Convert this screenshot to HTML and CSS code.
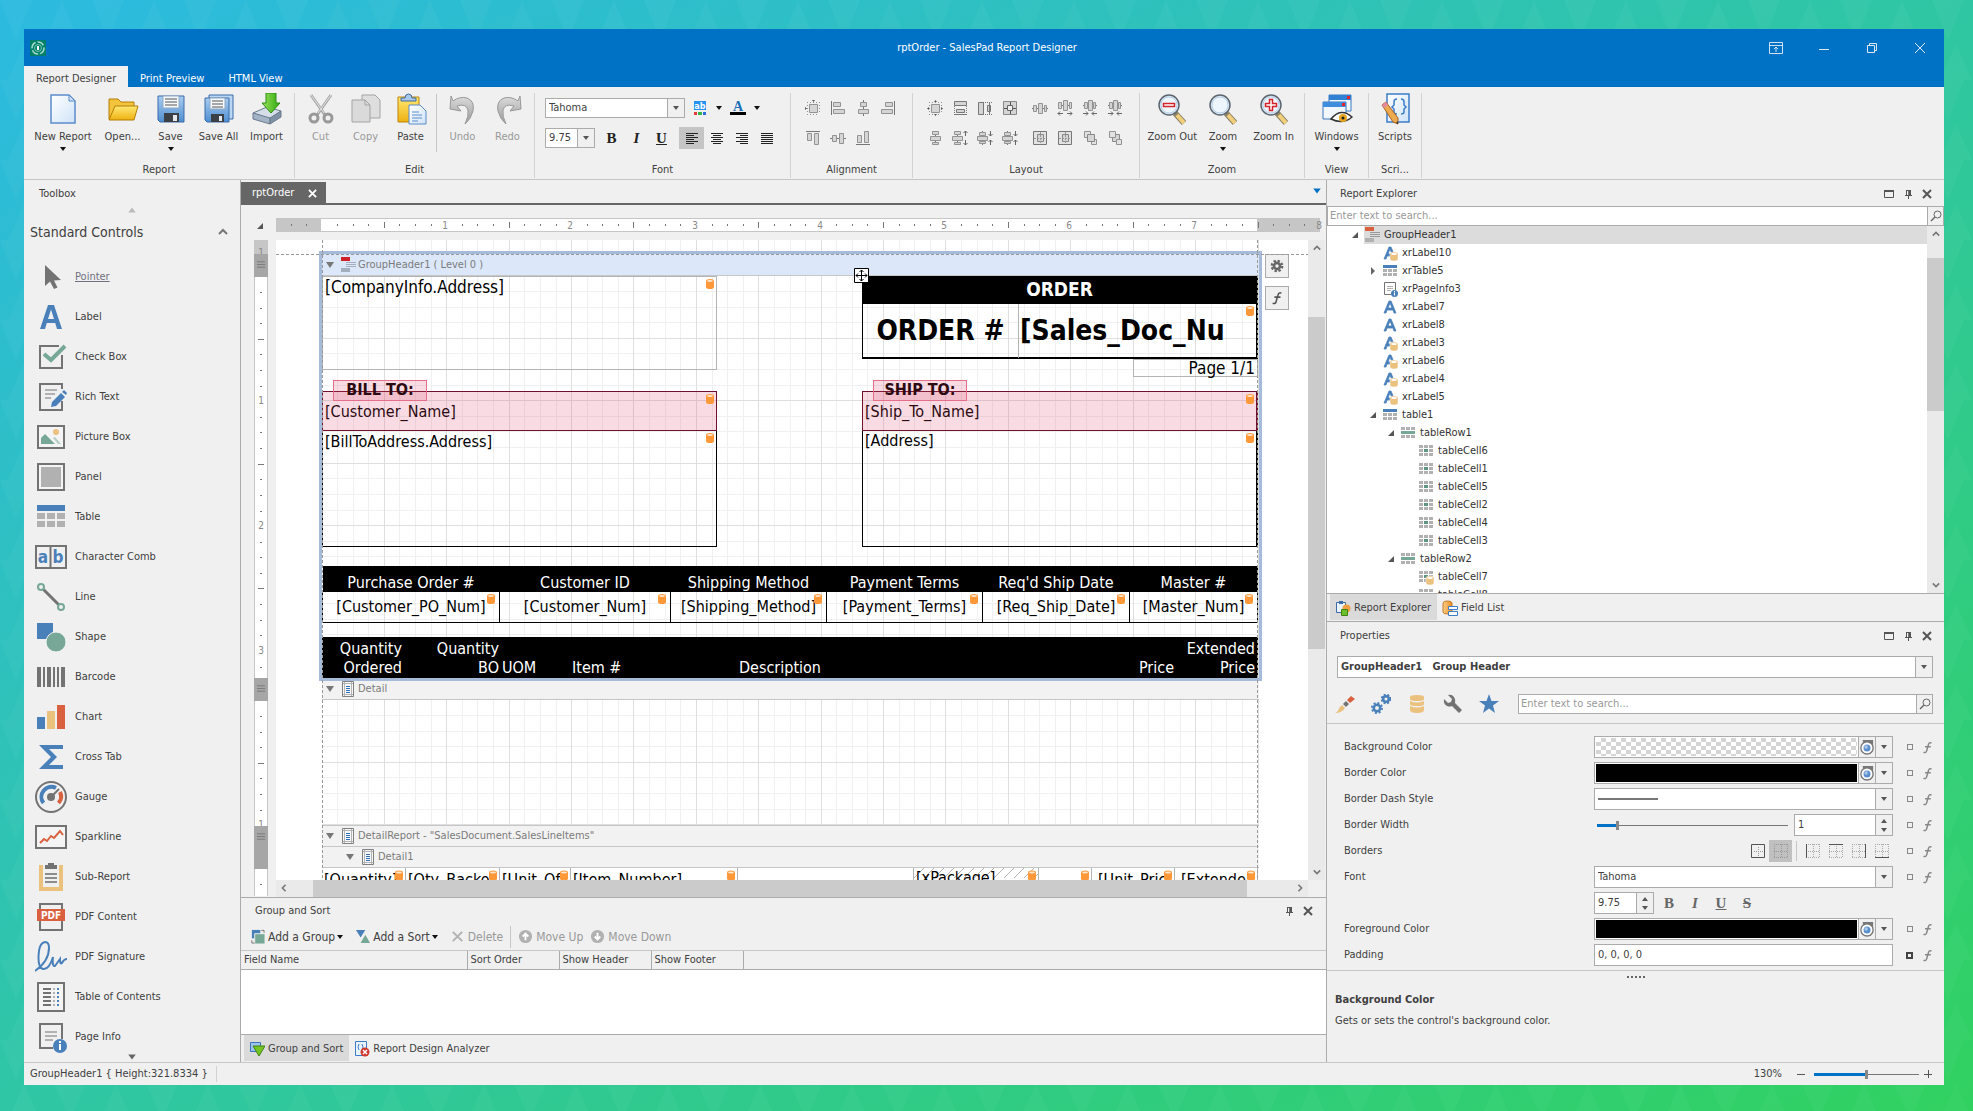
FILE: index.html
```html
<!DOCTYPE html>
<html lang="en">
<head>
<meta charset="utf-8">
<title>rptOrder - SalesPad Report Designer</title>
<link rel="stylesheet" href="styles.css">
</head>
<body>
<svg class="defs" aria-hidden="true">
  <defs>
    <linearGradient id="g-paper" x1="0" y1="0" x2="1" y2="1"><stop offset="0" stop-color="#fff"/><stop offset="1" stop-color="#cfe3f8"/></linearGradient>
    <linearGradient id="g-gold" x1="0" y1="0" x2="0" y2="1"><stop offset="0" stop-color="#ffe873"/><stop offset="1" stop-color="#eeb111"/></linearGradient>
    <linearGradient id="g-blue" x1="0" y1="0" x2="0" y2="1"><stop offset="0" stop-color="#a9cdf1"/><stop offset="1" stop-color="#4f8ed0"/></linearGradient>
    <linearGradient id="g-green" x1="0" y1="0" x2="1" y2="0"><stop offset="0" stop-color="#9be35a"/><stop offset="1" stop-color="#2fa80f"/></linearGradient>
    <linearGradient id="g-gray" x1="0" y1="0" x2="0" y2="1"><stop offset="0" stop-color="#dcdcdc"/><stop offset="1" stop-color="#9a9a9a"/></linearGradient>
    <linearGradient id="g-orange" x1="0" y1="0" x2="1" y2="0"><stop offset="0" stop-color="#fbd08a"/><stop offset="1" stop-color="#e98a1f"/></linearGradient>
    <pattern id="p-back" width="92" height="80" patternUnits="userSpaceOnUse"><path d="M0 0L16 40L32 0zM46 40L62 0L78 40zM8 80L24 44L40 80zM54 44L70 80L86 44z" fill="#fff" opacity=".03"/></pattern>
    <pattern id="p-hatch" width="10" height="10" patternUnits="userSpaceOnUse"><path d="M-2 12L12 -2M-2 2L2 -2M8 12L12 8" stroke="#b4b4b4"/></pattern>
  </defs>
  <symbol id="db" viewBox="0 0 8 10"><path d="M0 2Q0 0 4 0T8 2V8Q8 10 4 10T0 8z" fill="#ff9838"/><ellipse cx="4" cy="2" rx="3" ry="1" fill="#ffe6cf"/></symbol>
  <symbol id="down" viewBox="0 0 8 8"><path d="M1 2h6L4 6z" fill="currentColor"/></symbol>
  <symbol id="up" viewBox="0 0 8 8"><path d="M1 6h6L4 2z" fill="currentColor"/></symbol>
  <symbol id="tri" viewBox="0 0 8 8"><path d="M0 1h8L4 7z" fill="#777"/></symbol>
  <symbol id="chev-u" viewBox="0 0 10 10"><path d="M1 7L5 3L9 7" fill="none" stroke="#777" stroke-width="2"/></symbol>
  <symbol id="chev-d" viewBox="0 0 10 10"><path d="M1 3L5 7L9 3" fill="none" stroke="#777" stroke-width="2"/></symbol>
  <symbol id="chev-l" viewBox="0 0 10 10"><path d="M7 1L3 5L7 9" fill="none" stroke="#777" stroke-width="2"/></symbol>
  <symbol id="chev-r" viewBox="0 0 10 10"><path d="M3 1L7 5L3 9" fill="none" stroke="#777" stroke-width="2"/></symbol>
  <symbol id="open" viewBox="0 0 8 8"><path d="M7 1V7H1z" fill="#555"/></symbol>
  <symbol id="shut" viewBox="0 0 8 8"><path d="M2 0V8L6 4z" fill="#666"/></symbol>
  <symbol id="close" viewBox="0 0 10 10"><path d="M1 1L9 9M9 1L1 9" stroke="currentColor" stroke-width="2"/></symbol>
  <symbol id="pin" viewBox="0 0 10 10"><path d="M3.500 1V6M6 1v5" stroke="#555"/><path d="M5.500 1H8v5H5.500zM2 6h7v1H2zM5 7h1v3H5zM3 1h5v1H3z" fill="#555"/></symbol>
  <symbol id="maxi" viewBox="0 0 10 10"><path d="M.5 1.500h9v7h-9z" fill="none" stroke="#555"/><path d="M0 1h10v2H0z" fill="#555"/></symbol>
  <symbol id="search" viewBox="0 0 12 12"><circle cx="7.500" cy="4.500" r="3.500" fill="none" stroke="#666"/><path d="M5 7L1 11" stroke="#666" stroke-width="1.500"/></symbol>
  <symbol id="fx" viewBox="0 0 12 16"><path d="M11 2.500Q8 1 7 5L5 12Q4.500 15 1 14M3 7h7" fill="none" stroke="currentColor" stroke-width="1.800"/></symbol>

  <symbol id="r-new" viewBox="0 0 32 32"><path d="M4 2H22L28 8V30H4z" fill="url(#g-paper)" stroke="#5b8ccb" stroke-width="1.500"/><path d="M22 2V8H28z" fill="#cfe0f5" stroke="#5b8ccb"/></symbol>
  <symbol id="r-open" viewBox="0 0 32 32"><path d="M2 26V6H11L14 9H27V14" fill="#f3c33c" stroke="#b57d07"/><path d="M2 27L8 13H31L27 27z" fill="url(#g-gold)" stroke="#b57d07"/></symbol>
  <symbol id="r-save" viewBox="0 0 32 32"><path d="M3 3H29V29H5L3 27z" fill="url(#g-blue)" stroke="#3a6cab"/><path d="M8 3H24V15H8z" fill="#f6f8fa" stroke="#8fa9c5"/><path d="M10 6H22M10 9H22M10 12H22" stroke="#555"/><path d="M9 20H24V29H9z" fill="#3b3f46"/><path d="M18 22H22V28H18z" fill="#e5e9ee"/></symbol>
  <symbol id="r-saveall" viewBox="0 0 32 32"><path d="M6 2H30V26H6z" fill="#b9d6f3" stroke="#3a6cab"/><path d="M2 5H26V29H4L2 27z" fill="url(#g-blue)" stroke="#3a6cab"/><path d="M7 5H22V16H7z" fill="#f6f8fa" stroke="#8fa9c5"/><path d="M9 8H20M9 11H20M9 14H20" stroke="#555"/><path d="M8 21H21V29H8z" fill="#3b3f46"/><path d="M16 23H19V28H16z" fill="#e5e9ee"/></symbol>
  <symbol id="r-import" viewBox="0 0 32 32"><path d="M2 20L16 14L30 18L19 26z" fill="#d5dee8" stroke="#6b7a8c"/><path d="M2 20L19 25V31L2 26z" fill="#a3b4c6" stroke="#6b7a8c"/><path d="M19 25L30 18V24L19 31z" fill="#7f91a5" stroke="#6b7a8c"/><path d="M15 0H25V10H29L20 20L11 10H15z" fill="url(#g-green)" stroke="#2d8d14"/></symbol>
  <symbol id="r-cut" viewBox="0 0 32 32"><path d="M6 2L20 22M26 2L12 22" stroke="#a8a8a8" stroke-width="3"/><path d="M6 2L19 20M26 2L13 20" stroke="#e2e2e2"/><circle cx="9" cy="25" r="4" fill="none" stroke="#999" stroke-width="3"/><circle cx="23" cy="25" r="4" fill="none" stroke="#999" stroke-width="3"/></symbol>
  <symbol id="r-copy" viewBox="0 0 32 32"><path d="M12 2H25L30 7V25H12z" fill="#dedede" stroke="#a3a3a3"/><path d="M2 7H15L20 12V29H2z" fill="#dadada" stroke="#a3a3a3"/><path d="M15 7V12H20" fill="none" stroke="#a3a3a3"/></symbol>
  <symbol id="r-paste" viewBox="0 0 32 32"><path d="M3 4H24V29H3z" fill="url(#g-gold)" stroke="#bd8508"/><path d="M6 8V5H10Q10 1 13.500 1T17 5H21V8z" fill="#a9c8ea" stroke="#41699b"/><path d="M14 12H25L31 18V31H14z" fill="url(#g-paper)" stroke="#5b8ccb"/><path d="M17 19H24M17 22H27M17 25H27M17 28H23" stroke="#5b8ccb"/></symbol>
  <symbol id="r-undo" viewBox="0 0 32 32"><path d="M4 3L6 8Q13 3 20 5Q28 8 26 18Q24 26 18 31Q22 23 21 17Q19 10 10 13L14 18L3 16z" fill="url(#g-gray)" stroke="#989898"/></symbol>
  <symbol id="r-redo" viewBox="0 0 32 32"><path d="M28 3L26 8Q19 3 12 5Q4 8 6 18Q8 26 14 31Q10 23 11 17Q13 10 22 13L18 18L29 16z" fill="url(#g-gray)" stroke="#989898"/></symbol>
  <symbol id="r-lens" viewBox="0 0 32 32"><path d="M19 20L28 30" stroke="#8d8468" stroke-width="6"/><path d="M21 22L28 30" stroke="#f2cf7a" stroke-width="4"/><circle cx="13" cy="12" r="10" fill="#dcebf9" stroke="#5d666f" stroke-width="1.500"/><circle cx="13" cy="12" r="8" fill="#eef6fd" stroke="#b8cfe6"/></symbol>
  <symbol id="r-windows" viewBox="0 0 32 32"><path d="M8 2H30V18H8z" fill="#f1f7fd" stroke="#3a78c0"/><path d="M8 2H30V7H8z" fill="#2f7fd4"/><path d="M2 9H25V26H2z" fill="#f1f7fd" stroke="#3a78c0"/><path d="M2 9H25V14H2z" fill="#3f8ede"/><path d="M26 3h3v3h-3zM21 10h3v3h-3z" fill="#e0262b"/><path d="M10 26Q20 14 31 24Q22 32 10 26z" fill="#fff" stroke="#333" stroke-width="1.500"/><circle cx="22" cy="25" r="4" fill="#e5a51c"/><circle cx="22" cy="25" r="1.500" fill="#222"/></symbol>
  <symbol id="r-scripts" viewBox="0 0 32 32"><path d="M8 1H30V29H8z" fill="url(#g-paper)" stroke="#3d7cc9" stroke-width="1.500"/><path d="M18 6Q15 6 15 9V12L13 14L15 16V19Q15 21 18 21M22 6Q25 6 25 9V12L27 14L25 16V19Q25 21 22 21" fill="none" stroke="#3d7cc9" stroke-width="1.500"/><path d="M3 12L7 9L19 25L19 31L14 29z" fill="#edaa4e" stroke="#a4602a"/><path d="M3 12L7 9L9 12L5 15z" fill="#e58aa0"/><path d="M17 30L19 31V28z" fill="#333"/></symbol>

  <symbol id="al-grid" viewBox="0 0 16 16"><path d="M4.500 4.500h8v8h-8z" fill="#d5d5d5" stroke="#939393"/><path d="M2 2.500h12M2 14.500h12M2.500 2v12M14.500 2v12" stroke="#939393" stroke-dasharray="1 2"/><path d="M7 0h3L8.500 2zM0 7v3L2 8.500z" fill="#555"/></symbol>
  <symbol id="ly-grid" viewBox="0 0 16 16"><path d="M4.500 4.500h8v8h-8z" fill="#d5d5d5" stroke="#939393"/><path d="M2 2.500h12M2 14.500h12M2.500 2v12M14.500 2v12" stroke="#939393" stroke-dasharray="1 2"/><path d="M7 2h3L8.500 0zM2 7v3L0 8.500zM7 14h3L8.500 16zM14 7v3L16 8.500z" fill="#555"/></symbol>
  <symbol id="al-left" viewBox="0 0 16 16"><path d="M1.500 1v14" stroke="#777"/><path d="M3.500 2.500h7v4h-7zM3.500 9.500h11v4h-11z" fill="#d5d5d5" stroke="#939393"/></symbol>
  <symbol id="al-center" viewBox="0 0 16 16"><path d="M8.500 0v16" stroke="#777"/><path d="M5.500 2.500h6v4h-6zM3.500 9.500h10v4h-10z" fill="#d5d5d5" stroke="#939393"/></symbol>
  <symbol id="al-right" viewBox="0 0 16 16"><path d="M14.500 1v14" stroke="#777"/><path d="M5.500 2.500h7v4h-7zM1.500 9.500h11v4h-11z" fill="#d5d5d5" stroke="#939393"/></symbol>
  <symbol id="al-top" viewBox="0 0 16 16"><path d="M1 1.500h14" stroke="#777"/><path d="M2.500 3.500h4v7h-4zM9.500 3.500h4v11h-4z" fill="#d5d5d5" stroke="#939393"/></symbol>
  <symbol id="al-mid" viewBox="0 0 16 16"><path d="M0 8.500h16" stroke="#777"/><path d="M2.500 5.500h4v6h-4zM9.500 3.500h4v10h-4z" fill="#d5d5d5" stroke="#939393"/></symbol>
  <symbol id="al-bot" viewBox="0 0 16 16"><path d="M1 14.500h14" stroke="#777"/><path d="M2.500 5.500h4v7h-4zM9.500 1.500h4v11h-4z" fill="#d5d5d5" stroke="#939393"/></symbol>
  <symbol id="ly-w" viewBox="0 0 16 16"><path d="M2.500 1.500h12v4h-12zM4.500 9.500h8v3h-8z" fill="#d5d5d5" stroke="#777"/><path d="M2.500 6v9M14.500 6v9" stroke="#777" stroke-dasharray="1 1"/><path d="M2 14.500h13" stroke="#777"/></symbol>
  <symbol id="ly-h" viewBox="0 0 16 16"><path d="M1.500 2.500h5v12h-5zM10.500 5.500h3v6h-3z" fill="#d5d5d5" stroke="#777"/><path d="M6 2.500h9M6 14.500h9" stroke="#777" stroke-dasharray="1 1"/><path d="M12.500 2v13" stroke="#777"/></symbol>
  <symbol id="ly-wh" viewBox="0 0 16 16"><path d="M1.500 1.500h13v13h-13z" fill="#d5d5d5" stroke="#888"/><path d="M5.500 5.500h5v5h-5z" fill="#eee" stroke="#666"/><path d="M2 8.500h3M11 8.500h3M8.500 2v3M8.500 11v3" stroke="#555"/></symbol>
  <symbol id="ly-hs" viewBox="0 0 16 16"><path d="M0 8.500h16" stroke="#777"/><path d="M1.500 5.500h3v6h-3zM6.500 3.500h4v10h-4zM12.500 5.500h2v6h-2z" fill="#d5d5d5" stroke="#939393"/></symbol>
  <symbol id="ly-hi" viewBox="0 0 16 16"><path d="M1 5.500h14" stroke="#777"/><path d="M1.500 2.500h3v6h-3zM6.500 .5h4v10h-4zM12.500 2.500h2v6h-2z" fill="#d5d5d5" stroke="#939393"/><path d="M1 13.500h5M10 13.500h5M3 11.500L1 13.500L3 15.500M13 11.500L15 13.500L13 15.500" fill="none" stroke="#666"/></symbol>
  <symbol id="ly-hd" viewBox="0 0 16 16"><path d="M1 5.500h14" stroke="#777"/><path d="M2.500 2.500h3v6h-3zM6.500 .5h4v10h-4zM11.500 2.500h2v6h-2z" fill="#d5d5d5" stroke="#939393"/><path d="M1 13.500h5M10 13.500h5M4 11.500L6 13.500L4 15.500M12 11.500L10 13.500L12 15.500" fill="none" stroke="#666"/></symbol>
  <symbol id="ly-vs" viewBox="0 0 16 16"><path d="M8.500 1v14" stroke="#777"/><path d="M5.500 1.500h6v3h-6zM3.500 6.500h10v4h-10zM5.500 12.500h6v2h-6z" fill="#d5d5d5" stroke="#939393"/></symbol>
  <symbol id="ly-vi" viewBox="0 0 16 16"><path d="M5.500 1v14" stroke="#777"/><path d="M2.500 1.500h6v3h-6zM.5 6.500h10v4h-10zM2.500 12.500h6v2h-6z" fill="#d5d5d5" stroke="#939393"/><path d="M13.500 1v5M13.500 10v5M11.500 3L13.500 1L15.500 3M11.500 13L13.500 15L15.500 13" fill="none" stroke="#666"/></symbol>
  <symbol id="ly-vd" viewBox="0 0 16 16"><path d="M5.500 1v14" stroke="#777"/><path d="M2.500 2.500h6v3h-6zM.5 6.500h10v4h-10zM2.500 11.500h6v2h-6z" fill="#d5d5d5" stroke="#939393"/><path d="M13.500 1v5M13.500 10v5M11.500 4L13.500 6L15.500 4M11.500 12L13.500 10L15.500 12" fill="none" stroke="#666"/></symbol>
  <symbol id="ly-box" viewBox="0 0 16 16"><path d="M1.500 1.500h13v13h-13z" fill="#e2e2e2" stroke="#777"/><path d="M5.500 4.500h6v7h-6z" fill="#d5d5d5" stroke="#888"/><path d="M2 8.500h12M8.500 2v12" stroke="#999" stroke-dasharray="2 1"/></symbol>
  <symbol id="ly-front" viewBox="0 0 16 16"><path d="M2.500 1.500h6v6h-6zM9.500 9.500h5v5h-5z" fill="#e2e2e2" stroke="#939393"/><path d="M5.500 4.500h7v7h-7z" fill="#d5d5d5" stroke="#888"/></symbol>
  <symbol id="ly-back" viewBox="0 0 16 16"><path d="M5.500 4.500h7v7h-7z" fill="#d5d5d5" stroke="#888"/><path d="M2.500 1.500h6v6h-6zM9.500 9.500h5v5h-5z" fill="#e2e2e2" stroke="#939393"/></symbol>

  <symbol id="lines-l" viewBox="0 0 16 16"><path d="M2 3.500h12M2 5.500h8M2 7.500h12M2 9.500h8M2 11.500h12M2 13.500h8" stroke="#222"/></symbol>
  <symbol id="lines-c" viewBox="0 0 16 16"><path d="M2 3.500h12M4 5.500h8M2 7.500h12M4 9.500h8M2 11.500h12M4 13.500h8" stroke="#222"/></symbol>
  <symbol id="lines-r" viewBox="0 0 16 16"><path d="M2 3.500h12M6 5.500h8M2 7.500h12M6 9.500h8M2 11.500h12M6 13.500h8" stroke="#222"/></symbol>
  <symbol id="lines-j" viewBox="0 0 16 16"><path d="M2 3.500h12M2 5.500h12M2 7.500h12M2 9.500h12M2 11.500h12M2 13.500h12" stroke="#222"/></symbol>

  <symbol id="t-pointer" viewBox="0 0 32 32"><path d="M10 4V25L15 20.500L19 28L22.500 26.500L19 19.500L26 19z" fill="#737373"/></symbol>
  <symbol id="t-label" viewBox="0 0 32 32"><path fill-rule="evenodd" d="M5 28L13 4H19L27 28H22L20.200 22H11.800L10 28zM13 18H19L16 8.500z" fill="#4a80ba"/></symbol>
  <symbol id="t-check" viewBox="0 0 32 32"><path d="M24 5H5V27H27V14" fill="none" stroke="#737373" stroke-width="2"/><path d="M9 13L16 19L30 5" fill="none" stroke="#76a797" stroke-width="4"/></symbol>
  <symbol id="t-rich" viewBox="0 0 32 32"><path d="M27 8V3H5V29H27V20" fill="none" stroke="#737373" stroke-width="2"/><path d="M10 9H22M10 13H20M10 17H16" stroke="#b1b1b1" stroke-width="2"/><path d="M17 21L26 12L30 16L21 25L16 26zM27 11L29 9L32 12L31 14z" fill="#4a80ba"/></symbol>
  <symbol id="t-picture" viewBox="0 0 32 32"><path d="M3 5H29V27H3z" fill="#f4f4f4" stroke="#737373" stroke-width="2"/><path d="M6 23V17L10 13L20 23z" fill="#76a797"/><path d="M18 17L20 16L26 23H23z" fill="#b5cfc6"/><circle cx="21" cy="11" r="3" fill="#ebc17e"/></symbol>
  <symbol id="t-panel" viewBox="0 0 32 32"><path d="M3 3H29V29H3z" fill="#f4f4f4" stroke="#737373" stroke-width="2"/><path d="M6 6H26V26H6z" fill="#b1b1b1"/></symbol>
  <symbol id="t-table" viewBox="0 0 32 32"><path d="M2 4H30V10H2z" fill="#4a80ba"/><path d="M2 12h8v6H2zM12 12h8v6h-8zM22 12h8v6h-8zM2 20h8v6H2zM12 20h8v6h-8zM22 20h8v6h-8z" fill="#b1b1b1"/></symbol>
  <symbol id="t-comb" viewBox="0 0 32 32"><path d="M1 5H31V27H1zM15.500 5V27" fill="none" stroke="#737373" stroke-width="2"/></symbol>
  <symbol id="t-line" viewBox="0 0 32 32"><path d="M8 8L24 24" stroke="#737373" stroke-width="3"/><circle cx="6" cy="6" r="3" fill="#f0f0f0" stroke="#76a797" stroke-width="2"/><circle cx="26" cy="26" r="3" fill="#f0f0f0" stroke="#76a797" stroke-width="2"/></symbol>
  <symbol id="t-shape" viewBox="0 0 32 32"><path d="M2 2H18V18H2z" fill="#4a80ba"/><circle cx="21" cy="21" r="10" fill="#76a797" stroke="#f0f0f0"/></symbol>
  <symbol id="t-barcode" viewBox="0 0 32 32"><path d="M2 6h4v20H2zM8 6h2v20H8zM12 6h4v20h-4zM18 6h2v20h-2zM22 6h2v20h-2zM26 6h4v20h-4z" fill="#737373"/></symbol>
  <symbol id="t-chart" viewBox="0 0 32 32"><path d="M2 16h8v12H2z" fill="#4a80ba"/><path d="M12 10h8v18h-8z" fill="#ebc17e"/><path d="M22 4h8v24h-8z" fill="#d9613f"/></symbol>
  <symbol id="t-sigma" viewBox="0 0 32 32"><path d="M4 4H28V8H14L22 16L14 24H28V28H4L16 16z" fill="#4a80ba"/></symbol>
  <symbol id="t-gauge" viewBox="0 0 32 32"><circle cx="16" cy="16" r="15" fill="none" stroke="#737373" stroke-width="2"/><path d="M8.500 22A10 10 0 0 1 21 7" fill="none" stroke="#4a80ba" stroke-width="4"/><path d="M25 11A10 10 0 0 1 23.500 22" fill="none" stroke="#d9613f" stroke-width="4"/><path d="M16 16L24 8" stroke="#737373" stroke-width="2"/><circle cx="16" cy="16" r="4" fill="#737373"/></symbol>
  <symbol id="t-spark" viewBox="0 0 32 32"><path d="M1 5H31V27H1z" fill="#f4f4f4" stroke="#737373" stroke-width="2"/><path d="M5 22L9 18L12 20L16 15L19 17L25 10L28 14" fill="none" stroke="#d9613f" stroke-width="2"/></symbol>
  <symbol id="t-sub" viewBox="0 0 32 32"><path d="M8 4H4V30H28V4H24V26H8z" fill="#ebc17e"/><path d="M10 4H13V2H19V4H22V8H10z" fill="#737373"/><path d="M10 13H22M10 17H22M10 21H22" stroke="#8c8c8c" stroke-width="2"/></symbol>
  <symbol id="t-pdf" viewBox="0 0 32 32"><path d="M5 3H27V29H5z" fill="none" stroke="#737373" stroke-width="2"/><path d="M2 8H30V20H2z" fill="#d9613f"/></symbol>
  <symbol id="t-sign" viewBox="0 0 32 32"><path d="M0 30Q14 20 14 7Q14 1 10 1Q5 2 4 10Q2 26 8 28Q14 29 18 16Q17 26 20 25L25 18Q25 24 27 22Q29 18 32 18" fill="none" stroke="#4a80ba" stroke-width="2"/></symbol>
  <symbol id="t-toc" viewBox="0 0 32 32"><path d="M3 2H29V30H3z" fill="#f4f4f4" stroke="#737373" stroke-width="2"/><path d="M8 8H16M8 12H16M8 16H16M8 20H16M8 24H16" stroke="#737373" stroke-width="2"/><path d="M19 7v18" stroke="#b1b1b1" stroke-width="2" stroke-dasharray="2 2"/><path d="M23 7v18" stroke="#4a80ba" stroke-width="2" stroke-dasharray="2 2"/></symbol>
  <symbol id="t-info" viewBox="0 0 32 32"><path d="M18 27H5V3H27V18" fill="none" stroke="#737373" stroke-width="2"/><path d="M10 11H22M10 15H22M10 19H18" stroke="#b1b1b1" stroke-width="2"/><circle cx="25" cy="25" r="7" fill="#4a80ba"/><path d="M24 20h2v2h-2zM24 23h2v6h-2z" fill="#fff"/></symbol>

  <symbol id="s-db" viewBox="0 0 16 16"><path d="M8 9Q8 7 12 7T16 9V14Q16 16 12 16T8 14z" fill="#ebc17e" stroke="#fff" stroke-width=".5"/><ellipse cx="12" cy="9" rx="3" ry="1" fill="#fff"/></symbol>
  <symbol id="s-group" viewBox="0 0 16 16"><path d="M1 0h9v4H1z" fill="#d9613f"/><path d="M6 5.500h10M6 7.500h10M6 9.500h10" stroke="#999"/><path d="M1 11h9v4H1z" fill="#b1b1b1"/></symbol>
  <symbol id="s-band" viewBox="0 0 16 16"><path d="M1 0h9v4H1z" fill="#d02027"/><path d="M6 5.500h10M6 7.500h10M6 9.500h10" stroke="#a5aebd"/><path d="M1 11h9v4H1z" fill="#a5aebd"/></symbol>
  <symbol id="s-label" viewBox="0 0 16 16"><path fill-rule="evenodd" d="M2 14L7 2H9L14 14H12L11 11H5L4 14zM6 9H10L8 4z" fill="#4a80ba" stroke="#4a80ba" stroke-width=".8"/></symbol>
  <symbol id="s-table" viewBox="0 0 16 16"><path d="M1 2H15V5H1z" fill="#4a80ba"/><path d="M1 6h4v3H1zM6 6h4v3H6zM11 6h4v3h-4zM1 10h4v3H1zM6 10h4v3H6zM11 10h4v3h-4z" fill="#b1b1b1"/></symbol>
  <symbol id="s-row" viewBox="0 0 16 16"><path d="M1 2h4v3H1zM6 2h4v3H6zM11 2h4v3h-4zM1 10h4v3H1zM6 10h4v3H6zM11 10h4v3h-4z" fill="#b1b1b1"/><path d="M1 6h14v3H1z" fill="#76a797"/></symbol>
  <symbol id="s-cell" viewBox="0 0 16 16"><path d="M1 2h4v3H1zM6 2h4v3H6zM11 2h4v3h-4zM1 6h4v3H1zM11 6h4v3h-4zM1 10h4v3H1zM6 10h4v3H6zM11 10h4v3h-4z" fill="#b1b1b1"/><path d="M6 6h4v3H6z" fill="#5f9584"/></symbol>
  <symbol id="s-detail" viewBox="0 0 16 16"><path d="M2.500 .5h11v15h-11z" fill="#f7f7f7" stroke="#808080"/><path d="M4.500 1v14M11.500 1v14M3 2.500h10M3 13.500h10" stroke="#b4b4b4"/><path d="M6 5.500h4M6 7.500h4M6 9.500h4M6 11.500h4" stroke="#2f6fb8"/></symbol>
  <symbol id="eye" viewBox="0 0 16 18"><path d="M3 1H15V12L12 17H6Z" fill="#777"/><ellipse cx="8" cy="10" rx="7" ry="7" fill="#fff" stroke="#777" stroke-width="1.500"/><circle cx="8" cy="10" r="4" fill="#5b8fce"/><circle cx="7" cy="9" r="2" fill="#a9c7ea"/></symbol>
  <symbol id="grip" viewBox="0 0 10 7"><path d="M0 .5h9M0 3.500h9M0 6.500h9" stroke="#777"/></symbol>
</svg>

<svg class="backdrop" aria-hidden="true"><rect width="100%" height="100%" fill="url(#p-back)"/></svg>

<div class="window">
  <header class="titlebar">
    <svg class="logo" viewBox="0 0 16 16"><path d="M0 0h16v16H0z" fill="#00806a"/><circle cx="8" cy="8" r="6" fill="none" stroke="#a8dccf" stroke-width="1.500" stroke-dasharray="7 2"/><circle cx="8" cy="8" r="3.500" fill="none" stroke="#7cc4b3"/><path d="M7 6h2v4H7z" fill="#fff"/></svg>
    <h1>rptOrder - SalesPad Report Designer</h1>
    <div class="winbtns">
      <button aria-label="Ribbon display options"><svg viewBox="0 0 14 14"><path d="M.5 1.500h13v11H.5zM.5 4.500h13M7 11V6M5 8L7 6L9 8" fill="none" stroke="#cfe3f5"/></svg></button>
      <button aria-label="Minimize"><svg viewBox="0 0 14 14"><path d="M2 8.500h10" stroke="#dbe9f6"/></svg></button>
      <button aria-label="Restore"><svg viewBox="0 0 14 14"><path d="M2.500 4.500h7v7h-7zM4.500 4V2.500h7v7H10" fill="none" stroke="#dbe9f6"/></svg></button>
      <button aria-label="Close"><svg viewBox="0 0 14 14"><path d="M2 2L12 12M12 2L2 12" stroke="#dbe9f6"/></svg></button>
    </div>
  </header>
  <nav class="ribbon-tabs">
    <button class="on">Report Designer</button><button>Print Preview</button><button>HTML View</button>
  </nav>

  <section class="ribbon" aria-label="Ribbon">
    <div class="group g-report">
      <div class="tools">
        <button class="big wide"><svg><use href="#r-new"/></svg><span>New Report</span><svg class="dd"><use href="#down"/></svg></button>
        <button class="big mid"><svg><use href="#r-open"/></svg><span>Open...</span></button>
        <button class="big"><svg><use href="#r-save"/></svg><span>Save</span><svg class="dd"><use href="#down"/></svg></button>
        <button class="big mid"><svg><use href="#r-saveall"/></svg><span>Save All</span></button>
        <button class="big"><svg><use href="#r-import"/></svg><span>Import</span></button>
      </div>
      <h2>Report</h2>
    </div>
    <div class="group g-edit">
      <div class="tools">
        <button class="big" disabled><svg><use href="#r-cut"/></svg><span>Cut</span></button>
        <button class="big" disabled><svg><use href="#r-copy"/></svg><span>Copy</span></button>
        <button class="big"><svg><use href="#r-paste"/></svg><span>Paste</span></button>
        <i class="vline"></i>
        <button class="big" disabled><svg><use href="#r-undo"/></svg><span>Undo</span></button>
        <button class="big" disabled><svg><use href="#r-redo"/></svg><span>Redo</span></button>
      </div>
      <h2>Edit</h2>
    </div>
    <div class="group g-font">
      <div class="tools rows">
        <div class="line">
          <span class="combo c-face"><select aria-label="Font"><option>Tahoma</option></select><i><svg><use href="#down"/></svg></i></span>
          <button class="ico tight" aria-label="Highlight colour"><svg viewBox="0 0 16 16"><path d="M2 1h12v9H2z" fill="#2492f0"/><text x="8" y="9" class="ab">ab</text><path d="M2 12h3v3H2z" fill="#e23b3b"/><path d="M6 12h4v3H6z" fill="#35b548"/><path d="M11 12h3v3h-3z" fill="#2c6ddc"/></svg></button>
          <svg class="dd"><use href="#down"/></svg>
          <button class="ico tight" aria-label="Font colour"><svg viewBox="0 0 16 16"><text x="8" y="11" class="acap">A</text><path d="M0 12h16v3H0z"/></svg></button>
          <svg class="dd"><use href="#down"/></svg>
        </div>
        <div class="line">
          <span class="combo c-size"><select aria-label="Font size"><option>9.75</option></select><i><svg><use href="#down"/></svg></i></span>
          <button class="ico glyph b first">B</button><button class="ico glyph i">I</button><button class="ico glyph u">U</button>
          <button class="ico gap on" aria-label="Left"><svg><use href="#lines-l"/></svg></button><button class="ico" aria-label="Centre"><svg><use href="#lines-c"/></svg></button><button class="ico" aria-label="Right"><svg><use href="#lines-r"/></svg></button><button class="ico" aria-label="Justify"><svg><use href="#lines-j"/></svg></button>
        </div>
      </div>
      <h2>Font</h2>
    </div>
    <div class="group g-align">
      <div class="tools rows">
        <div class="line"><button class="ico" aria-label="Align to grid"><svg><use href="#al-grid"/></svg></button><button class="ico" aria-label="Lefts"><svg><use href="#al-left"/></svg></button><button class="ico" aria-label="Centres"><svg><use href="#al-center"/></svg></button><button class="ico" aria-label="Rights"><svg><use href="#al-right"/></svg></button></div>
        <div class="line"><button class="ico" aria-label="Tops"><svg><use href="#al-top"/></svg></button><button class="ico" aria-label="Middles"><svg><use href="#al-mid"/></svg></button><button class="ico" aria-label="Bottoms"><svg><use href="#al-bot"/></svg></button></div>
      </div>
      <h2>Alignment</h2>
    </div>
    <div class="group g-layout">
      <div class="tools rows">
        <div class="line"><button class="ico" aria-label="Size to grid"><svg><use href="#ly-grid"/></svg></button><button class="ico" aria-label="Same width"><svg><use href="#ly-w"/></svg></button><button class="ico" aria-label="Same height"><svg><use href="#ly-h"/></svg></button><button class="ico" aria-label="Same size"><svg><use href="#ly-wh"/></svg></button><button class="ico gap" aria-label="Horizontal spacing"><svg><use href="#ly-hs"/></svg></button><button class="ico" aria-label="Increase horizontal"><svg><use href="#ly-hi"/></svg></button><button class="ico" aria-label="Decrease horizontal"><svg><use href="#ly-hd"/></svg></button><button class="ico" aria-label="Remove horizontal"><svg><use href="#ly-hd"/></svg></button></div>
        <div class="line"><button class="ico" aria-label="Vertical spacing"><svg><use href="#ly-vs"/></svg></button><button class="ico" aria-label="Increase vertical"><svg><use href="#ly-vi"/></svg></button><button class="ico" aria-label="Decrease vertical"><svg><use href="#ly-vd"/></svg></button><button class="ico" aria-label="Remove vertical"><svg><use href="#ly-vd"/></svg></button><button class="ico gap" aria-label="Centre horizontally"><svg><use href="#ly-box"/></svg></button><button class="ico" aria-label="Centre vertically"><svg><use href="#ly-box"/></svg></button><button class="ico" aria-label="Bring to front"><svg><use href="#ly-front"/></svg></button><button class="ico" aria-label="Send to back"><svg><use href="#ly-back"/></svg></button></div>
      </div>
      <h2>Layout</h2>
    </div>
    <div class="group g-zoom">
      <div class="tools">
        <button class="big"><svg viewBox="0 0 32 32"><use href="#r-lens"/><path d="M7.500 10.500h11v3h-11z" fill="#fff" stroke="#d3242b" stroke-width="1.500"/></svg><span>Zoom Out</span></button>
        <button class="big"><svg><use href="#r-lens"/></svg><span>Zoom</span><svg class="dd"><use href="#down"/></svg></button>
        <button class="big"><svg viewBox="0 0 32 32"><use href="#r-lens"/><path d="M11.500 6.500h3v4h4v3h-4v4h-3v-4h-4v-3h4z" fill="#fff" stroke="#d3242b" stroke-width="1.500"/></svg><span>Zoom In</span></button>
      </div>
      <h2>Zoom</h2>
    </div>
    <div class="group g-view">
      <div class="tools"><button class="big"><svg><use href="#r-windows"/></svg><span>Windows</span><svg class="dd"><use href="#down"/></svg></button></div>
      <h2>View</h2>
    </div>
    <div class="group g-scripts">
      <div class="tools"><button class="big"><svg><use href="#r-scripts"/></svg><span>Scripts</span></button></div>
      <h2>Scri...</h2>
    </div>
  </section>

  <main class="work">
    <aside class="toolbox">
      <h2>Toolbox</h2>
      <svg class="more faint"><use href="#up"/></svg>
      <h3>Standard Controls <svg><use href="#chev-u"/></svg></h3>
      <ul>
        <li><button class="picked"><svg><use href="#t-pointer"/></svg>Pointer</button></li>
        <li><button><svg><use href="#t-label"/></svg>Label</button></li>
        <li><button><svg><use href="#t-check"/></svg>Check Box</button></li>
        <li><button><svg><use href="#t-rich"/></svg>Rich Text</button></li>
        <li><button><svg><use href="#t-picture"/></svg>Picture Box</button></li>
        <li><button><svg><use href="#t-panel"/></svg>Panel</button></li>
        <li><button><svg><use href="#t-table"/></svg>Table</button></li>
        <li><button><svg viewBox="0 0 32 32"><use href="#t-comb"/><text x="8" y="22" class="comb">a</text><text x="23" y="22" class="comb">b</text></svg>Character Comb</button></li>
        <li><button><svg><use href="#t-line"/></svg>Line</button></li>
        <li><button><svg><use href="#t-shape"/></svg>Shape</button></li>
        <li><button><svg><use href="#t-barcode"/></svg>Barcode</button></li>
        <li><button><svg><use href="#t-chart"/></svg>Chart</button></li>
        <li><button><svg><use href="#t-sigma"/></svg>Cross Tab</button></li>
        <li><button><svg><use href="#t-gauge"/></svg>Gauge</button></li>
        <li><button><svg><use href="#t-spark"/></svg>Sparkline</button></li>
        <li><button><svg><use href="#t-sub"/></svg>Sub-Report</button></li>
        <li><button><svg viewBox="0 0 32 32"><use href="#t-pdf"/><text x="16" y="18" class="pdf">PDF</text></svg>PDF Content</button></li>
        <li><button><svg><use href="#t-sign"/></svg>PDF Signature</button></li>
        <li><button><svg><use href="#t-toc"/></svg>Table of Contents</button></li>
        <li><button><svg><use href="#t-info"/></svg>Page Info</button></li>
      </ul>
      <svg class="more last"><use href="#down"/></svg>
    </aside>

    <div class="center">
      <div class="doc-tabs"><button>rptOrder <svg><use href="#close"/></svg></button><svg class="menu"><use href="#down"/></svg></div>
      <div class="designer">
        <svg class="corner"><use href="#open"/></svg>
        <div class="hruler"><i class="out lead"></i><i class="out tail"></i><svg class="over" data-ruler="x" data-from="-2" data-marks="64"></svg></div>
        <div class="vruler">
          <svg class="out"><text x="7" y="16">1</text></svg>
          <i class="grip g-one"><svg><use href="#grip"/></svg></i>
          <svg class="seg s-one" data-ruler="y" data-marks="25"></svg>
          <i class="grip g-one"><svg><use href="#grip"/></svg></i>
          <svg class="seg s-two" data-ruler="y" data-marks="8"></svg>
          <i class="grip g-two"><svg><use href="#grip"/></svg></i>
          <svg class="seg s-end" data-ruler="y" data-marks="1"></svg>
        </div>

        <div class="canvas">
          <div class="sheet">
            <div class="topmargin"><svg class="grid"></svg></div>
            <section class="band selected">
              <header><svg class="t"><use href="#tri"/></svg><svg class="k"><use href="#s-band"/></svg>GroupHeader1 ( Level 0 )</header>
              <div class="body b-head">
                <svg class="grid"></svg>
                <div class="box plain x-company">[CompanyInfo.Address]<svg><use href="#db"/></svg></div>
                <div class="box x-addr left">[BillToAddress.Address]<svg><use href="#db"/></svg></div>
                <div class="box pink x-name left"><span>[Customer_Name]</span><svg><use href="#db"/></svg></div>
                <div class="tag left">BILL TO:</div>
                <div class="order"><b class="cap">ORDER</b><b class="num">ORDER #</b><b class="val">[Sales_Doc_Nu<svg><use href="#db"/></svg></b></div>
                <div class="pageno">Page 1/1</div>
                <div class="box x-addr right">[Address]<svg><use href="#db"/></svg></div>
                <div class="box pink x-name right"><span>[Ship_To_Name]</span><svg><use href="#db"/></svg></div>
                <div class="tag right">SHIP TO:</div>
                <table class="summary">
                  <colgroup><col class="c1"><col class="c2"><col class="c3"><col class="c3"><col class="c5"><col></colgroup>
                  <tr><th>Purchase Order #</th><th>Customer ID</th><th>Shipping Method</th><th>Payment Terms</th><th>Req'd Ship Date</th><th>Master #</th></tr>
                  <tr><td>[Customer_PO_Num]<svg><use href="#db"/></svg></td><td>[Customer_Num]<svg><use href="#db"/></svg></td><td>[Shipping_Method]<svg><use href="#db"/></svg></td><td>[Payment_Terms]<svg><use href="#db"/></svg></td><td>[Req_Ship_Date]<svg><use href="#db"/></svg></td><td>[Master_Num]<svg><use href="#db"/></svg></td></tr>
                </table>
                <div class="cols">
                  <span class="k1">Quantity<br>Ordered</span><span class="k2">Quantity<br>BO</span><span class="k3">UOM</span><span class="k4">Item #</span><span class="k5">Description</span><span class="k6">Price</span><span class="k7">Extended<br>Price</span>
                </div>
                <svg class="move" viewBox="0 0 15 15"><path d="M.5.500h14v14H.5z" fill="#fff" stroke="#000"/><path d="M7.500 2v11M2 7.500h11M5.500 4L7.500 2L9.500 4M5.500 11L7.500 13L9.500 11M4 5.500L2 7.500L4 9.500M11 5.500L13 7.500L11 9.500" fill="none" stroke="#000"/></svg>
              </div>
              <div class="smart">
                <button aria-label="Settings"><svg viewBox="0 0 16 16"><circle cx="8" cy="8" r="3.500" fill="none" stroke="#666" stroke-width="3"/><circle cx="8" cy="8" r="6" fill="none" stroke="#666" stroke-width="2.500" stroke-dasharray="2.700 2"/></svg></button>
                <button aria-label="Expressions"><svg><use href="#fx"/></svg></button>
              </div>
            </section>
            <section class="band">
              <header><svg class="t"><use href="#tri"/></svg><svg class="k"><use href="#s-detail"/></svg>Detail</header>
              <div class="body b-detail"><svg class="grid"></svg></div>
            </section>
            <section class="band">
              <header class="ruled"><svg class="t"><use href="#tri"/></svg><svg class="k"><use href="#s-detail"/></svg>DetailReport - "SalesDocument.SalesLineItems"</header>
              <header class="sub"><svg class="t"><use href="#tri"/></svg><svg class="k"><use href="#s-detail"/></svg>Detail1</header>
              <div class="body b-items">
                <span class="i1">[Quantity]<svg><use href="#db"/></svg></span><span class="i2">[Qty_Backo<svg><use href="#db"/></svg></span><span class="i3">[Unit_Of<svg><use href="#db"/></svg></span><span class="i4">[Item_Number]<svg><use href="#db"/></svg></span><span class="i5"></span><span class="i6"><svg class="hatch"><rect width="100%" height="100%" fill="url(#p-hatch)"/></svg><em>[xPackage]</em><svg><use href="#db"/></svg></span><span class="i7"><svg><use href="#db"/></svg></span><span class="i8">[Unit_Pric<svg><use href="#db"/></svg></span><span class="i9">[Extende<svg><use href="#db"/></svg></span>
              </div>
            </section>
          </div>
        </div>
        <div class="vscroll"><svg><use href="#chev-u"/></svg><i></i><svg><use href="#chev-d"/></svg></div>
        <div class="hscroll"><svg><use href="#chev-l"/></svg><i></i><svg><use href="#chev-r"/></svg></div>
      </div>

      <section class="sorter">
        <div class="caption"><h2>Group and Sort</h2><button aria-label="Pin"><svg><use href="#pin"/></svg></button><button aria-label="Close"><svg><use href="#close"/></svg></button></div>
        <div class="bar">
          <button><svg class="ic" viewBox="0 0 16 16"><path d="M2 1h9v9H2z" fill="#4a80ba"/><path d="M5 5h11v11H5z" fill="#76a797" stroke="#f0f0f0"/><path d="M12 1.500h3V4M2 12v3h3" fill="none" stroke="#737373"/></svg>Add a Group<svg class="dd"><use href="#down"/></svg></button>
          <button><svg class="ic" viewBox="0 0 16 16"><path d="M1 1h10L6 9z" fill="#4a80ba"/><path d="M6 15h10L11 6z" fill="#76a797"/></svg>Add a Sort<svg class="dd"><use href="#down"/></svg></button>
          <button disabled><svg class="ic" viewBox="0 0 16 16"><path d="M3 3L13 13M13 3L3 13" stroke="#b1b1b1" stroke-width="2"/></svg>Delete</button>
          <i class="vline"></i>
          <button disabled><svg class="ic" viewBox="0 0 16 16"><circle cx="8" cy="8" r="7" fill="#b1b1b1"/><path d="M8 12V5M5 8L8 5L11 8" fill="none" stroke="#fff" stroke-width="2"/></svg>Move Up</button>
          <button disabled><svg class="ic" viewBox="0 0 16 16"><circle cx="8" cy="8" r="7" fill="#b1b1b1"/><path d="M8 4V11M5 8L8 11L11 8" fill="none" stroke="#fff" stroke-width="2"/></svg>Move Down</button>
        </div>
        <table class="fields"><tr><th class="f1">Field Name</th><th>Sort Order</th><th>Show Header</th><th>Show Footer</th><th class="rest"></th></tr></table>
        <div class="blank"></div>
        <nav class="dock-tabs">
          <button class="on"><svg viewBox="0 0 16 16"><path d="M1.500 1.500h10v9h-10z" fill="#9cc4ee" stroke="#3d72b5"/><path d="M4 5h12L10 15z" fill="#74c425" stroke="#3f8411"/></svg>Group and Sort</button>
          <button><svg viewBox="0 0 16 16"><path d="M1.500.500h11v14h-11z" fill="#eaf3fc" stroke="#3d7cc9"/><path d="M5 3L4 6L5 9M8 3L9 6L8 9" fill="none" stroke="#3d7cc9"/><circle cx="11" cy="11" r="4.500" fill="#d0392f"/><path d="M9 9L13 13M13 9L9 13" stroke="#fff" stroke-width="1.500"/></svg>Report Design Analyzer</button>
        </nav>
      </section>
    </div>

    <aside class="side">
      <section class="explorer">
        <div class="caption"><h2>Report Explorer</h2><button aria-label="Maximize"><svg><use href="#maxi"/></svg></button><button aria-label="Pin"><svg><use href="#pin"/></svg></button><button aria-label="Close"><svg><use href="#close"/></svg></button></div>
        <label class="find"><input type="text" aria-label="Search explorer" placeholder="Enter text to search..."><i><svg><use href="#search"/></svg></i></label>
        <div class="treebox">
          <ul class="tree">
            <li class="l0 on"><svg class="a"><use href="#open"/></svg><span><svg><use href="#s-group"/></svg>GroupHeader1</span></li>
            <li class="l1"><svg viewBox="0 0 16 16"><use href="#s-label"/><use href="#s-db"/></svg>xrLabel10</li>
            <li class="l1"><svg class="a"><use href="#shut"/></svg><svg><use href="#s-table"/></svg>xrTable5</li>
            <li class="l1"><svg viewBox="0 0 32 32"><use href="#t-info"/></svg>xrPageInfo3</li>
            <li class="l1"><svg><use href="#s-label"/></svg>xrLabel7</li>
            <li class="l1"><svg><use href="#s-label"/></svg>xrLabel8</li>
            <li class="l1"><svg viewBox="0 0 16 16"><use href="#s-label"/><use href="#s-db"/></svg>xrLabel3</li>
            <li class="l1"><svg viewBox="0 0 16 16"><use href="#s-label"/><use href="#s-db"/></svg>xrLabel6</li>
            <li class="l1"><svg viewBox="0 0 16 16"><use href="#s-label"/><use href="#s-db"/></svg>xrLabel4</li>
            <li class="l1"><svg viewBox="0 0 16 16"><use href="#s-label"/><use href="#s-db"/></svg>xrLabel5</li>
            <li class="l1"><svg class="a"><use href="#open"/></svg><svg><use href="#s-table"/></svg>table1</li>
            <li class="l2"><svg class="a"><use href="#open"/></svg><svg><use href="#s-row"/></svg>tableRow1</li>
            <li class="l3"><svg><use href="#s-cell"/></svg>tableCell6</li>
            <li class="l3"><svg><use href="#s-cell"/></svg>tableCell1</li>
            <li class="l3"><svg><use href="#s-cell"/></svg>tableCell5</li>
            <li class="l3"><svg><use href="#s-cell"/></svg>tableCell2</li>
            <li class="l3"><svg><use href="#s-cell"/></svg>tableCell4</li>
            <li class="l3"><svg><use href="#s-cell"/></svg>tableCell3</li>
            <li class="l2"><svg class="a"><use href="#open"/></svg><svg><use href="#s-row"/></svg>tableRow2</li>
            <li class="l3"><svg viewBox="0 0 16 16"><use href="#s-cell"/><use href="#s-db"/></svg>tableCell7</li>
            <li class="l3"><svg viewBox="0 0 16 16"><use href="#s-cell"/><use href="#s-db"/></svg>tableCell8</li>
          </ul>
          <div class="vscroll tree-scroll"><svg><use href="#chev-u"/></svg><i></i><svg><use href="#chev-d"/></svg></div>
        </div>
        <nav class="dock-tabs">
          <button class="on"><svg viewBox="0 0 16 16"><path d="M1.500 2.500h9v10h-9z" fill="#eaf3fc" stroke="#3d6da8"/><path d="M4 1h4v3H4z" fill="#3d6da8"/><circle cx="11.500" cy="8.500" r="4" fill="#f0a043"/><path d="M6.500 9.500h6v6h-6z" fill="#6cbf2c" stroke="#3f8411"/></svg>Report Explorer</button>
          <button><svg viewBox="0 0 16 16"><path d="M1 3Q1 1 5.500 1T10 3V12Q10 14 5.500 14T1 12z" fill="url(#g-orange)" stroke="#c5792a"/><path d="M6.500 6.500h9v3h-9zM6.500 11.500h9v4h-9z" fill="#fff" stroke="#3d7cc9"/></svg>Field List</button>
        </nav>
      </section>

      <section class="props">
        <div class="caption"><h2>Properties</h2><button aria-label="Maximize"><svg><use href="#maxi"/></svg></button><button aria-label="Pin"><svg><use href="#pin"/></svg></button><button aria-label="Close"><svg><use href="#close"/></svg></button></div>
        <span class="combo c-object"><select aria-label="Object"><option>GroupHeader1 &nbsp; Group Header</option></select><i><svg><use href="#down"/></svg></i></span>
        <div class="ptools">
          <button aria-label="Appearance"><svg viewBox="0 0 20 20"><path d="M0 19Q4 17 4 14L7 11L10 14Q7 19 0 19z" fill="#ebc17e"/><path d="M8 10L11 7L14 10L11 13z" fill="#737373"/><path d="M12 6L16 2L20 5L15 9z" fill="#d9613f"/></svg></button>
          <button aria-label="Behavior"><svg viewBox="0 0 20 20"><circle cx="6" cy="14" r="3.200" fill="none" stroke="#4a80ba" stroke-width="2.500"/><circle cx="6" cy="14" r="5" fill="none" stroke="#4a80ba" stroke-width="2" stroke-dasharray="2 1.900"/><circle cx="15" cy="5" r="2.800" fill="none" stroke="#4a80ba" stroke-width="2.500"/><circle cx="15" cy="5" r="4.300" fill="none" stroke="#4a80ba" stroke-width="2" stroke-dasharray="2 1.500"/></svg></button>
          <button aria-label="Data"><svg viewBox="0 0 20 20"><path d="M3 3Q3 1 10 1T17 3V5Q17 7 10 7T3 5zM3 7Q10 10 17 7V10Q17 12 10 12T3 10zM3 12Q10 15 17 12V16Q17 19 10 19T3 16z" fill="#ebc17e"/></svg></button>
          <button aria-label="Layout"><svg viewBox="0 0 20 20"><path d="M5 1L9 5L8 8L5 9L1 5Q0 10 4 12Q7 13 9 12L16 19L19 16L12 9Q13 6 11 3Q9 0 5 1z" fill="#737373"/></svg></button>
          <button aria-label="Favorites"><svg viewBox="0 0 20 20"><path d="M10 0L12.500 7H20L14 11.500L16 19L10 14.500L4 19L6 11.500L0 7H7.500z" fill="#4a80ba"/></svg></button>
          <label class="find"><input type="text" aria-label="Search properties" placeholder="Enter text to search..."><i><svg><use href="#search"/></svg></i></label>
        </div>
        <div class="prows">
          <div class="prow"><label for="bg">Background Color</label><span class="combo"><button id="bg" class="swatch clear"></button><i><svg class="eye"><use href="#eye"/></svg></i><i><svg><use href="#down"/></svg></i></span><b></b><svg><use href="#fx"/></svg></div>
          <div class="prow"><label for="bc">Border Color</label><span class="combo"><button id="bc" class="swatch"></button><i><svg class="eye"><use href="#eye"/></svg></i><i><svg><use href="#down"/></svg></i></span><b></b><svg><use href="#fx"/></svg></div>
          <div class="prow"><label for="ds">Border Dash Style</label><span class="combo"><button id="ds" class="dash"><s></s></button><i><svg><use href="#down"/></svg></i></span><b></b><svg><use href="#fx"/></svg></div>
          <div class="prow"><label for="bw">Border Width</label><span class="widthed"><input type="range" class="rng low" aria-label="Border Width" min="0" max="100" value="10"><span class="combo spin"><input id="bw" type="text" value="1"><i class="ud"><svg><use href="#up"/></svg><svg><use href="#down"/></svg></i></span></span><b></b><svg><use href="#fx"/></svg></div>
          <div class="prow"><span>Borders</span><span class="bords">
            <button aria-label="All"><svg viewBox="0 0 14 14"><path d="M.5.500h13v13H.5z" fill="none" stroke="#555"/><path d="M7.500 3v9M3 7.500h9" stroke="#999" stroke-dasharray="1 1"/></svg></button>
            <button class="on" aria-label="None"><svg viewBox="0 0 14 14"><path d="M0 .5h14M0 7.500h14M0 13.500h14M.5 0v14M7.500 0v14M13.500 0v14" stroke="#999" stroke-dasharray="1 1"/></svg></button>
            <i></i>
            <button aria-label="Left"><svg viewBox="0 0 14 14"><path d="M0 .5h14M0 7.500h14M0 13.500h14M7.500 0v14M13.500 0v14" stroke="#aaa" stroke-dasharray="1 1"/><path d="M.5 0v14" stroke="#555"/></svg></button>
            <button aria-label="Top"><svg viewBox="0 0 14 14"><path d="M0 7.500h14M0 13.500h14M.5 0v14M7.500 0v14M13.500 0v14" stroke="#aaa" stroke-dasharray="1 1"/><path d="M0 .5h14" stroke="#555"/></svg></button>
            <button aria-label="Right"><svg viewBox="0 0 14 14"><path d="M0 .5h14M0 7.500h14M0 13.500h14M.5 0v14M7.500 0v14" stroke="#aaa" stroke-dasharray="1 1"/><path d="M13.500 0v14" stroke="#555"/></svg></button>
            <button aria-label="Bottom"><svg viewBox="0 0 14 14"><path d="M0 .5h14M0 7.500h14M.5 0v14M7.500 0v14M13.500 0v14" stroke="#aaa" stroke-dasharray="1 1"/><path d="M0 13.500h14" stroke="#555"/></svg></button>
          </span><b></b><svg><use href="#fx"/></svg></div>
          <div class="prow"><label for="pf">Font</label><span class="combo"><select id="pf"><option>Tahoma</option></select><i><svg><use href="#down"/></svg></i></span><b></b><svg><use href="#fx"/></svg></div>
          <div class="prow"><span></span><span class="fonts"><span class="combo size"><input type="text" aria-label="Size" value="9.75"><i class="ud"><svg><use href="#up"/></svg><svg><use href="#down"/></svg></i></span><button class="glyph b">B</button><button class="glyph i">I</button><button class="glyph u">U</button><button class="glyph s">S</button></span></div>
          <div class="prow"><label for="fc">Foreground Color</label><span class="combo"><button id="fc" class="swatch"></button><i><svg class="eye"><use href="#eye"/></svg></i><i><svg><use href="#down"/></svg></i></span><b></b><svg><use href="#fx"/></svg></div>
          <div class="prow"><label for="pd">Padding</label><span class="combo"><input id="pd" type="text" value="0, 0, 0, 0"></span><b class="set"></b><svg><use href="#fx"/></svg></div>
        </div>
        <div class="hint"><i></i><h3>Background Color</h3><p>Gets or sets the control's background color.</p></div>
      </section>
    </aside>
  </main>

  <footer class="status">
    <span class="where">GroupHeader1 { Height:321.8334 }</span>
    <span class="zoom"><label for="zm">130%</label><svg viewBox="0 0 8 8"><path d="M0 4.500h8" stroke="#555"/></svg><input id="zm" type="range" class="rng half" min="0" max="100" value="50"><svg viewBox="0 0 8 8"><path d="M0 4.500h8M4.500 0v8" stroke="#555"/></svg></span>
  </footer>
</div>
<script src="script.js"></script>
</body>
</html>
```
FILE: styles.css
```css
* { box-sizing: border-box; margin: 0; padding: 0; }
html, body { height: 100%; }
body {
  font: 11px/16px "DejaVu Sans Condensed", "DejaVu Sans", Tahoma, sans-serif;
  color: #404040;
  background: linear-gradient(150deg, #2cbae0, #2fc6a4 50%, #31d160);
  padding: 29px 29px 26px 24px;
  white-space: nowrap;
  overflow: hidden;
}
button, input, select { font: inherit; color: inherit; background: none; border: 0; border-radius: 0; outline: 0; appearance: none; min-width: 0; }
h1, h2, h3, th { font: inherit; }
ul { list-style: none; }
i { font-style: normal; }
svg { display: block; flex: none; }
.defs { position: absolute; width: 0; height: 0; }
.backdrop { position: absolute; inset: 0; width: 100%; height: 100%; }

.window { position: relative; height: 100%; display: flex; flex-direction: column; background: #f0f0f0; }

/* Title bar */
.titlebar { height: 37px; flex: none; display: grid; grid-template-columns: 1fr auto 1fr; align-items: center; background: #0072c6; color: #fff; padding: 0 0 0 6px; }
.logo { width: 16px; height: 16px; }
.winbtns { display: flex; justify-content: flex-end; }
.winbtns button { width: 48px; height: 30px; display: grid; place-items: center; }
.winbtns svg { width: 14px; height: 14px; }
.ribbon-tabs { height: 21px; flex: none; display: flex; background: #0072c6; }
.ribbon-tabs button { color: #fff; padding: 4px 12px 0; }
.ribbon-tabs .on { background: #f0f0f0; color: #404040; width: 104px; }

/* Ribbon */
.ribbon { height: 93px; flex: none; display: flex; border-bottom: 1px solid #c6c6c6; padding: 6px 0 1px; }
.group { display: flex; flex-direction: column; justify-content: space-between; border-right: 1px solid #d2d2d2; flex: none; }
.group h2 { text-align: center; }
.tools { display: flex; height: 60px; }
.big { width: 45px; display: flex; flex-direction: column; align-items: center; }
.big svg { width: 32px; height: 32px; }
.big span { margin-top: 4px; }
.big .dd, .dd { width: 8px; height: 8px; color: #111; }
.mid { width: 54px; }
.wide { width: 66px; }
.big:disabled { color: #999; }
.vline { width: 1px; background: #c6c6c6; margin: 1px 3px; }
.g-report { width: 271px; }
.g-report .tools { padding-left: 6px; }
.g-report .big { width: 43px; }
.g-report .mid { width: 53px; }
.g-report .wide { width: 66px; }
.g-edit { width: 240px; }
.g-edit .tools { padding-left: 3px; }
.g-font { width: 256px; padding: 0 10px; }
.g-align { width: 122px; }
.g-layout { width: 227px; }
.g-align .tools, .g-layout .tools { padding-left: 9px; }
.g-zoom { width: 165px; }
.g-zoom .tools { justify-content: space-around; padding: 0 5px 0 7px; }
.g-view { width: 64px; }
.g-scripts { width: 53px; }
.g-view .tools, .g-scripts .tools { justify-content: center; }
.rows { flex-direction: column; gap: 8px; padding-top: 4px; }
.line { display: flex; align-items: center; height: 22px; }
.ico { width: 25px; height: 22px; display: grid; place-items: center; }
.ico svg { width: 16px; height: 16px; }
.ico.on { background: #c5c5c5; }
.ico.gap { margin-left: 5px; }
.ico.first { margin-left: 4px; }
.tight { width: 31px; margin-left: -1px; }
.ab { font: bold 9px "DejaVu Sans Condensed", sans-serif; fill: #fff; text-anchor: middle; }
.acap { font: bold 14px "Liberation Serif", serif; fill: #1c6fb8; text-anchor: middle; }
.glyph { font: bold 15px/16px "Liberation Serif", serif; color: #222; }
.glyph.i { font-style: italic; }
.glyph.u { text-decoration: underline; }
.glyph.s { text-decoration: line-through; }

.combo { display: flex; background: #fff; border: 1px solid #ababab; height: 22px; }
.combo select, .combo input { flex: 1; padding: 0 3px; width: 100%; }
.combo > i { flex: none; width: 17px; border-left: 1px solid #ababab; background: #f0f0f0; display: grid; place-items: center; }
.combo > i svg { width: 8px; height: 8px; color: #555; }
.c-face { width: 140px; height: 20px; }
.c-size { width: 50px; height: 20px; }

/* Work area */
.work { flex: 1; min-height: 0; display: grid; grid-template-columns: 217px minmax(0, 1fr) 618px; }
.toolbox { border-right: 1px solid #ababab; display: flex; flex-direction: column; min-height: 0; padding-top: 6px; }
.toolbox h2 { padding-left: 15px; }
.more { width: 10px; height: 10px; align-self: center; margin-top: 3px; color: #666; position: relative; }
.last { margin-top: -5px; }
.faint { color: #bbb; }
.toolbox h3 { font-size: 14px; display: flex; justify-content: space-between; align-items: center; height: 42px; padding: 0 12px 0 6px; }
.toolbox h3 svg { width: 10px; height: 10px; }
.toolbox ul { padding-top: 8px; }
.toolbox li button { display: flex; align-items: center; gap: 8px; height: 40px; padding-left: 11px; }
.toolbox li svg { width: 32px; height: 32px; }
.picked { color: #707080; text-decoration: underline; }
.comb { font: bold 17px "DejaVu Sans Condensed", sans-serif; fill: #4a80ba; text-anchor: middle; }
.pdf { font: bold 10px "DejaVu Sans Condensed", sans-serif; fill: #fff; text-anchor: middle; }

.center { display: flex; flex-direction: column; min-height: 0; }
.doc-tabs { display: flex; justify-content: space-between; align-items: center; height: 25px; padding-top: 2px; border-bottom: 2px solid #666; flex: none; }
.doc-tabs button { display: flex; align-items: center; justify-content: space-between; width: 85px; height: 21px; padding: 1px 9px 0 11px; background: #666; color: #fff; }
.doc-tabs button svg { width: 9px; height: 9px; }
.doc-tabs .menu { width: 10px; height: 10px; margin: 0 4px 4px 0; color: #0072c6; }

/* Design surface */
.designer { flex: 1; min-height: 0; display: grid; grid-template: 35px minmax(0, 1fr) 17px / 35px minmax(0, 1fr) 18px; }
.corner { width: 8px; height: 8px; margin: 17px 0 0 15px; }
.hruler { grid-column: 2 / 4; position: relative; display: flex; height: 14px; margin: 13px 6px 0 0; background: #fff; border: solid #c6c6c6; border-width: 1px 0; }
.hruler .over { position: absolute; inset: -1px 0; width: 100%; height: 14px; overflow: visible; }
.out { background: #c6c6c6; }
.lead { width: 45px; }
.tail { width: 63px; margin-left: auto; }
.designer text { font: 10px "DejaVu Sans Condensed", sans-serif; fill: #888; text-anchor: middle; }
.vruler { grid-row: 2 / 4; width: 14px; margin: 0 0 1px 13px; display: flex; flex-direction: column; min-height: 0; overflow: hidden; }
.vruler svg { width: 14px; }
.vruler .out { height: 14px; }
.vruler .seg { background: #fff; border: solid #c6c6c6; border-width: 0 1px; }
.s-one { height: 401px; }
.s-two { height: 125px; }
.vruler .s-end { flex: 1; min-height: 0; }
.grip { background: #a6a6a6; padding: 7px 0 0 3px; flex: none; }
.vruler .grip svg { width: 9px; height: 7px; }
.g-one { height: 23px; }
.g-two { height: 43px; }
.canvas { position: relative; background: #fff; overflow: hidden; }
.sheet { width: 937px; margin-left: 46px; position: relative; }
.sheet::before { content: ""; position: absolute; z-index: 3; inset: 0 1px 0 0; border: dashed #999; border-width: 0 1px; pointer-events: none; }
.sheet::after { content: ""; position: absolute; z-index: 3; left: -46px; right: -60px; top: 14px; border-top: 1px dashed #999; }
.topmargin { height: 14px; position: relative; }
.grid { position: absolute; inset: 0; width: 100%; height: 100%; }
.band { position: relative; }
.band.selected { outline: 3px solid #a5bbd9; z-index: 2; }
.band header { height: 22px; display: flex; align-items: center; background: #f2f2f2; border-bottom: 1px solid #c6c6c6; color: #7b7b7b; padding-left: 4px; }
.band .ruled { border-top: 1px solid #c6c6c6; }
.band .sub { padding-left: 24px; height: 21px; }
.selected header { background: #dce8fa; padding-top: 1px; }
.band .t { width: 8px; height: 8px; }
.band .k { width: 16px; height: 16px; margin: 0 2px 0 6px; }
.body { position: relative; font-size: 16px; line-height: 19px; color: #000; }
.b-head { height: 402px; }
.b-detail { height: 125px; }
.b-items { height: 40px; }
.box { position: absolute; border: 1px solid #000; width: 395px; padding: 1px 2px; }
.box > svg, .val > svg, .summary svg, .b-items svg { position: absolute; width: 8px; height: 10px; right: 2px; top: 2px; }
.summary svg { right: 4px; }
.plain { border-color: #b4b4b4; font-size: 17px; height: 94px; left: 0; }
.left { left: 0; }
.right { left: 540px; }
.x-company { top: 0; }
.x-name { top: 115px; height: 40px; }
.x-name span { display: block; padding-top: 9px; }
.x-addr { top: 154px; height: 117px; }
.box.right { width: 396px; border-right-width: 2px; }
.x-addr.right { padding-top: 0; }
.pink { border-color: #70102c; color: #2d0a12; background: rgba(225, 70, 105, .19); }
.tag { position: absolute; top: 104px; width: 94px; height: 21px; border: 1px solid #e56f8b; background: rgba(225, 70, 105, .19); color: #2d0a12; font-weight: bold; text-align: center; font-size: 16px; line-height: 18px; }
.tag.left { left: 11px; }
.tag.right { left: 551px; }
.order { position: absolute; left: 540px; top: 0; width: 396px; height: 83px; display: grid; grid-template: 28px 1fr / 156px 1fr; border: solid #000; border-width: 0 2px 2px 1px; }
.cap { grid-column: 1 / 3; background: #000; color: #fff; font-size: 19px; line-height: 27px; text-align: center; }
.num, .val { font-size: 28px; line-height: 54px; }
.num { text-align: center; border-right: 1px solid #b4b4b4; }
.val { position: relative; padding-left: 1px; }
.pageno { position: absolute; left: 811px; top: 83px; width: 125px; height: 18px; border: 1px solid #b4b4b4; text-align: right; padding-right: 2px; font-size: 17px; line-height: 17px; }
.summary { position: absolute; left: 0; top: 290px; width: 936px; height: 56px; table-layout: fixed; border-collapse: collapse; text-align: center; }
.summary th { background: #000; color: #fff; height: 26px; padding-top: 7px; line-height: 19px; }
.summary td { position: relative; border: solid #000; border-width: 0 1px 1px; height: 30px; }
.c1 { width: 177px; }
.c2 { width: 171px; }
.c3 { width: 156px; }
.c5 { width: 147px; }
.cols { position: absolute; left: 0; top: 361px; width: 936px; height: 41px; padding: 1px 3px 1px 0; background: #000; color: #fff; display: flex; align-items: flex-end; text-align: right; }
.k1 { width: 80px; }
.k2 { width: 97px; }
.k3 { width: 73px; padding-left: 3px; text-align: left; }
.k4 { width: 167px; text-align: left; }
.k5 { flex: 1; text-align: left; }
.k7 { width: 81px; }
.move { position: absolute; left: 532px; top: -8px; width: 15px; height: 15px; z-index: 4; }
.smart { position: absolute; left: 943px; top: 0; display: grid; gap: 8px; z-index: 4; }
.smart button { width: 24px; height: 24px; border: 1px solid #ababab; background: #f0f0f0; display: grid; place-items: center; }
.smart svg { width: 14px; height: 14px; color: #555; }
.b-items { display: flex; }
.b-items > span { position: relative; padding: 2px 2px 0; border: solid #b4b4b4; border-width: 0 1px 0 0; overflow: hidden; }
.b-items svg { height: 11px; }
.i1 { width: 84px; }
.i2 { width: 94px; }
.i3 { width: 71px; }
.i4 { width: 167px; }
.i5 { width: 176px; }
.i6 { width: 125px; }
.i6 em { position: relative; font-style: normal; line-height: 16px; display: block; }
.i7 { width: 53px; }
.i8 { width: 83px; }
.i9 { width: 83px; }
.b-items .i8, .b-items .i9 { padding-left: 6px; }
.b-items .hatch { inset: 0; width: 100%; height: 10px; }
.vscroll, .hscroll { display: flex; align-items: center; justify-content: space-between; background: #eaeaea; }
.vscroll { flex-direction: column; padding: 4px 0; position: relative; }
.vscroll svg, .hscroll svg { width: 8px; height: 8px; }
.designer .vscroll { margin-right: 1px; }
.vscroll i { position: absolute; top: 12%; bottom: 36%; width: 100%; background: #cbcbcb; }
.hscroll { grid-column: 2; padding: 0 4px; }
.hscroll i { flex: 1; align-self: stretch; background: #cbcbcb; margin: 0 49px 0 25px; }

/* Tool windows */
.caption { display: flex; align-items: center; gap: 9px; height: 26px; padding: 0 13px; flex: none; }
.caption h2 { flex: 1; }
.caption button svg { width: 10px; height: 10px; color: #555; }
.sorter { border-top: 1px solid #ababab; display: flex; flex-direction: column; flex: none; }
.sorter .caption { padding-left: 14px; }
.bar { display: flex; align-items: center; height: 27px; padding: 0 9px; font-size: 12px; border-bottom: 1px solid #c6c6c6; }
.bar button { display: flex; align-items: center; gap: 3px; margin-right: 11px; }
.bar .dd { margin-left: -2px; }
.bar .ic { width: 15px; height: 15px; }
.bar button:disabled { color: #999; margin-right: 7px; }
.bar .vline { height: 22px; margin: 0 7px 0 0; }
.fields { border-collapse: collapse; table-layout: fixed; width: 100%; }
.fields th { width: 92px; height: 19px; text-align: left; padding: 0 3px; border: solid #ababab; border-width: 0 1px 1px 0; line-height: 16px; }
.fields .f1 { width: 226px; }
.fields .rest { width: auto; border-right: 0; }
.blank { height: 64px; background: #fff; }
.dock-tabs { display: flex; border-top: 1px solid #ababab; height: 28px; padding: 0 3px 1px; }
.dock-tabs button { display: flex; align-items: center; gap: 3px; padding: 1px 6px 0 5px; }
.dock-tabs .on { background: #dadada; }
.dock-tabs svg { width: 16px; height: 16px; }

.side { border-left: 1px solid #ababab; display: flex; flex-direction: column; min-height: 0; }
.explorer { display: flex; flex-direction: column; border-bottom: 1px solid #ababab; }
.side .caption { padding: 1px 12px 0 13px; }
.find { display: flex; background: #fff; border: 1px solid #ababab; height: 20px; color: #999; }
.find input { flex: 1; padding: 0 2px; }
.find input::placeholder { color: #999; }
.find i { width: 16px; border-left: 1px solid #ababab; background: #f0f0f0; display: grid; place-items: center; }
.find svg { width: 12px; height: 12px; }
.treebox { display: grid; grid-template-columns: 1fr 17px; height: 367px; background: #fff; overflow: hidden; }
.tree { overflow: hidden; color: #333; }
.tree li { display: flex; align-items: center; height: 18px; }
.tree svg { width: 16px; height: 16px; margin-right: 4px; }
.tree .a { width: 8px; height: 8px; margin: 0 5px 0 -13px; }
.l0 { padding-left: 37px; }
.l0 span { display: flex; flex: 1; background: #dcdcdc; padding: 1px 0; }
.l1 { padding-left: 55px; }
.l2 { padding-left: 73px; }
.l3 { padding-left: 91px; }
.tree-scroll i { top: 32px; bottom: 182px; }

.props { flex: 1; min-height: 0; display: flex; flex-direction: column; }
.c-object { margin: 8px 11px 0 10px; font-weight: bold; }
.ptools { display: flex; align-items: center; height: 46px; padding: 7px 11px 0 8px; gap: 16px; border-bottom: 1px solid #c6c6c6; }
.ptools button svg { width: 20px; height: 20px; }
.ptools .find { flex: 1; margin-left: 3px; }
.prows { display: grid; align-content: start; gap: 4px; padding: 12px 11px 0 17px; height: 247px; overflow: hidden; border-bottom: 1px solid #c6c6c6; }
.prow { display: grid; grid-template-columns: minmax(0, 1fr) 299px 14px 14px; align-items: center; height: 22px; column-gap: 6px; }
.prow > b { width: 6px; height: 6px; border: 1px solid #888; justify-self: end; }
.prow > .set { border: 2px solid #444; width: 7px; height: 7px; }
.prow > svg { width: 11px; height: 13px; color: #888; justify-self: end; }
.prow .swatch { flex: 1; margin: 1px; background: #000; }
.prow .clear { background: repeating-conic-gradient(#d4d4d4 0 25%, #fff 0 50%) 0 0 / 10px 8px; }
.combo > i .eye { width: 14px; height: 16px; }
.prow .dash { flex: 1; padding-left: 3px; }
.dash s { display: block; width: 60px; height: 2px; background: #777; }
.widthed { display: flex; gap: 6px; align-items: center; padding-left: 3px; }
.widthed .rng { flex: 1; }
.spin { width: 99px; }
.combo > .ud { padding: 1px 0; }
.rng { height: 10px; min-width: 0; background: linear-gradient(#0072c6, #0072c6) 0 50% / 10% 3px no-repeat, linear-gradient(#777, #777) 0 50% / 100% 1px no-repeat; }
.rng.half { width: 105px; background-size: 50% 3px, 100% 1px; }
.rng::-webkit-slider-thumb { appearance: none; width: 3px; height: 9px; background: #888; }
.bords { display: flex; justify-content: flex-end; align-items: center; }
.bords button { width: 23px; height: 22px; display: grid; place-items: center; }
.bords svg { width: 14px; height: 14px; }
.bords .on { background: #c0c0c0; }
.bords i { width: 1px; height: 20px; background: #c6c6c6; margin: 0 4px; }
.fonts { display: flex; align-items: center; }
.size { width: 60px; margin-right: 2px; }
.fonts .glyph { width: 26px; color: #666; }
.hint { padding: 2px 8px; display: grid; gap: 5px; }
.hint i { justify-self: center; width: 18px; border-top: 2px dotted #666; height: 11px; margin-top: 3px; }
.hint h3 { font-weight: bold; }

.status { height: 23px; flex: none; border-top: 1px solid #c6c6c6; display: flex; justify-content: space-between; align-items: center; padding: 0 12px 0 6px; }
.where { border-right: 1px solid #d2d2d2; padding-right: 8px; }
.zoom { display: flex; align-items: center; gap: 5px; }
.zoom label { margin-right: 10px; }
.zoom input { margin-left: 4px; }
.zoom svg { width: 8px; height: 8px; }
```
FILE: script.js
```js
// One mark is an eighth of an inch at 96 dpi and the 130% zoom.
const STEP = 96 * 1.3 / 8;
const NS = "http://www.w3.org/2000/svg";
const at = i => i > 0 ? Math.ceil(i * STEP) - 1 : Math.round(i * STEP);

function path(svg, d, stroke) {
  const p = document.createElementNS(NS, "path");
  p.setAttribute("d", d);
  p.setAttribute("stroke", stroke);
  svg.appendChild(p);
}

function drawGrid(svg) {
  const { width, height } = svg.getBoundingClientRect();
  let minor = "", major = "";
  for (let i = 1; at(i) < width; i++) {
    const d = `M${at(i)}.5 0V${height}`;
    if (i % 4) minor += d; else major += d;
  }
  for (let i = 1; at(i) < height; i++) {
    const d = `M0 ${at(i)}.5H${width}`;
    if (i % 4) minor += d; else major += d;
  }
  path(svg, minor, "#f0f0f0");
  path(svg, major, "#dfdfdf");
}

function drawRuler(svg) {
  const across = svg.dataset.ruler === "x";
  const zero = across ? 46 : 0;
  const from = Number(svg.dataset.from || 1);
  let marks = "";
  for (let i = from; i <= Number(svg.dataset.marks); i++) {
    if (i === 0) continue;
    const pos = zero + at(i);
    if (i % 8 === 0) {
      const t = document.createElementNS(NS, "text");
      t.setAttribute("x", across ? pos - 1 : 6);
      t.setAttribute("y", across ? 11 : pos + 3);
      t.textContent = i / 8;
      svg.appendChild(t);
    } else {
      const half = i % 4 ? 1 : 3;
      marks += across ? `M${pos}.5 ${7 - half}v${half * 2}` : `M${6 - half} ${pos}.5h${half * 2}`;
    }
  }
  path(svg, marks, "#777");
}

document.querySelectorAll(".grid").forEach(drawGrid);
document.querySelectorAll(".over, .seg").forEach(drawRuler);
```
